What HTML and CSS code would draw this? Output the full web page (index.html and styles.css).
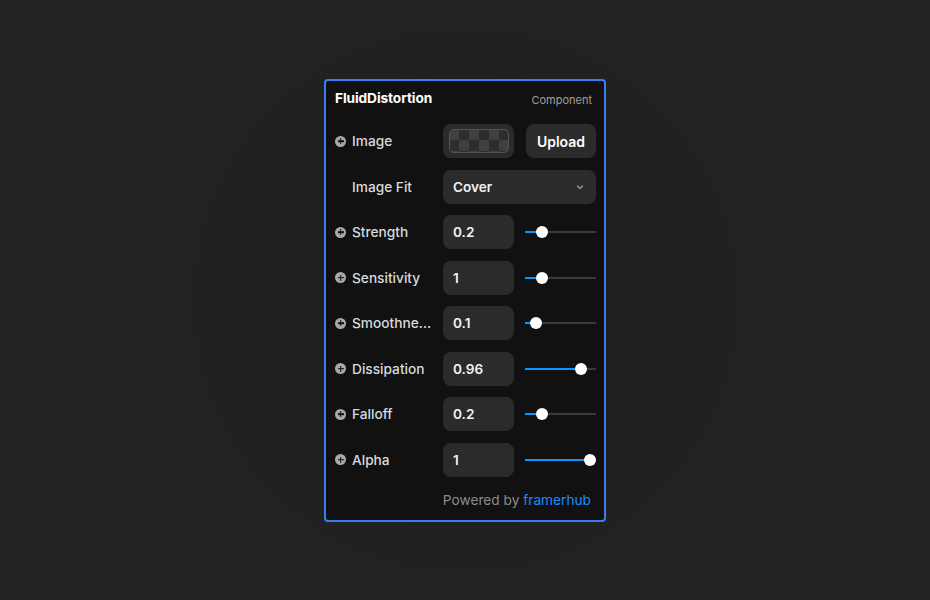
FILE: index.html
```html
<!DOCTYPE html>
<html lang="en">
<head>
<meta charset="utf-8">
<title>FluidDistortion</title>
<link rel="stylesheet" href="styles.css">
</head>
<body>
<div class="panel">
  <div class="header">
    <span class="title">FluidDistortion</span>
    <span class="kind">Component</span>
  </div>

  <div class="rows">
    <div class="row">
      <div class="label"><span class="plus"></span><span class="text">Image</span></div>
      <div class="controls">
        <div class="box swatch"><div class="checker"></div></div>
        <div class="box button">Upload</div>
      </div>
    </div>

    <div class="row">
      <div class="label"><span class="noicon"></span><span class="text">Image Fit</span></div>
      <div class="controls">
        <div class="box select">
          <span>Cover</span>
          <svg class="chev" width="10" height="10" viewBox="0 0 10 10"><path d="M2.5 4 L5 6.5 L7.5 4" fill="none" stroke="#9a9a9a" stroke-width="1.3" stroke-linecap="round" stroke-linejoin="round"/></svg>
        </div>
      </div>
    </div>

    <div class="row">
      <div class="label"><span class="plus"></span><span class="text">Strength</span></div>
      <div class="controls">
        <div class="box value">0.2</div>
        <div class="slider"><div class="fill" style="width: 17px"></div><div class="knob"></div><div class="rest"></div></div>
      </div>
    </div>

    <div class="row">
      <div class="label"><span class="plus"></span><span class="text">Sensitivity</span></div>
      <div class="controls">
        <div class="box value">1</div>
        <div class="slider"><div class="fill" style="width: 17px"></div><div class="knob"></div><div class="rest"></div></div>
      </div>
    </div>

    <div class="row">
      <div class="label"><span class="plus"></span><span class="text">Smoothness</span></div>
      <div class="controls">
        <div class="box value">0.1</div>
        <div class="slider"><div class="fill" style="width: 11px"></div><div class="knob"></div><div class="rest"></div></div>
      </div>
    </div>

    <div class="row">
      <div class="label"><span class="plus"></span><span class="text">Dissipation</span></div>
      <div class="controls">
        <div class="box value">0.96</div>
        <div class="slider"><div class="fill" style="width: 56px"></div><div class="knob"></div><div class="rest"></div></div>
      </div>
    </div>

    <div class="row">
      <div class="label"><span class="plus"></span><span class="text">Falloff</span></div>
      <div class="controls">
        <div class="box value">0.2</div>
        <div class="slider"><div class="fill" style="width: 17px"></div><div class="knob"></div><div class="rest"></div></div>
      </div>
    </div>

    <div class="row">
      <div class="label"><span class="plus"></span><span class="text">Alpha</span></div>
      <div class="controls">
        <div class="box value">1</div>
        <div class="slider"><div class="fill" style="width: 65px"></div><div class="knob"></div><div class="rest"></div></div>
      </div>
    </div>
  </div>

  <div class="footer">Powered by <span class="brand">framerhub</span></div>
</div>
</body>
</html>
```

FILE: styles.css
```css
* { box-sizing: border-box; }

html, body {
  margin: 0;
  height: 100%;
}

body {
  display: flex;
  align-items: center;
  justify-content: center;
  font-family: Inter, "Liberation Sans", sans-serif;
  background-color: #222222;
  background-image: radial-gradient(circle at 465px 300px,
    #202020 0, #202020 230px,
    #212121 230px, #212121 272px,
    #222222 272px, #222222 348px,
    #232323 348px, #232323 393px,
    #222222 393px);
}

.panel {
  width: 282px;
  background: #111111;
  border: 2px solid #3a7cf2;
  border-radius: 4px;
  padding: 9.5px 8px 12px 9px;
}

.header {
  display: flex;
  align-items: center;
  justify-content: space-between;
  height: 16px;
  margin-bottom: 18px;
  padding-right: 4px;
}

.title {
  color: #ffffff;
  font-size: 13.7px;
  font-weight: 700;
  letter-spacing: -0.1px;
}

.kind {
  color: #a0a0a0;
  font-size: 11px;
  font-weight: 400;
  margin-top: 4px;
}

.rows {
  display: flex;
  flex-direction: column;
  gap: 11.5px;
}

.row {
  display: flex;
  align-items: center;
  height: 34px;
}

.label {
  width: 108px;
  display: flex;
  align-items: center;
  gap: 6px;
  color: #d8dade;
  font-size: 13.7px;
  font-weight: 500;
}

.label .text {
  max-width: 80px;
  white-space: nowrap;
  overflow: hidden;
  text-overflow: ellipsis;
}

.plus, .noicon {
  flex: none;
  width: 11px;
  height: 11px;
}

.plus {
  position: relative;
  border-radius: 50%;
  background: #a8a8a8;
}

.plus::before, .plus::after {
  content: "";
  position: absolute;
  background: #111111;
  left: 50%;
  top: 50%;
  transform: translate(-50%, -50%);
}

.plus::before { width: 6px; height: 1.6px; }
.plus::after { width: 1.6px; height: 6px; }

.controls {
  flex: 1;
  display: flex;
  align-items: center;
  gap: 12px;
  height: 34px;
}

.box {
  height: 34px;
  border-radius: 8px;
  background: #2b2b2b;
  color: #f2f2f2;
  font-size: 13.6px;
  font-weight: 600;
  display: flex;
  align-items: center;
}

.value {
  width: 71px;
  padding-left: 10px;
}

.swatch {
  width: 71px;
  justify-content: center;
}

.checker {
  width: 60px;
  height: 24px;
  border: 1px solid #555555;
  border-radius: 5px;
  background-color: #2d2d2d;
  background-image:
    conic-gradient(#2d2d2d 0 25%, #404040 0 50%, #2d2d2d 0 75%, #404040 0);
  background-size: 20px 22px;
  background-position: -1px -1px;
}

.button {
  width: 70px;
  justify-content: center;
  color: #ffffff;
  font-size: 14px;
}

.select {
  width: 153px;
  padding: 0 10px;
  justify-content: space-between;
}

.chev { flex: none; margin-right: 1px; }

.slider {
  width: 71px;
  height: 12px;
  display: flex;
  align-items: center;
  margin-left: -1px;
}

.fill {
  height: 2px;
  background: #0a95ff;
  flex: none;
}

.knob {
  flex: none;
  width: 12px;
  height: 12px;
  border-radius: 50%;
  background: #ffffff;
  margin-left: -6px;
  margin-right: -6px;
  position: relative;
  z-index: 1;
}

.rest {
  flex: 1;
  height: 2px;
  background: #3a3a3a;
}

.footer {
  margin-top: 15px;
  height: 16px;
  line-height: 16px;
  text-align: right;
  padding-right: 5px;
  color: #8c8c8c;
  font-size: 13.7px;
}

.brand { color: #1a8cff; }
```
